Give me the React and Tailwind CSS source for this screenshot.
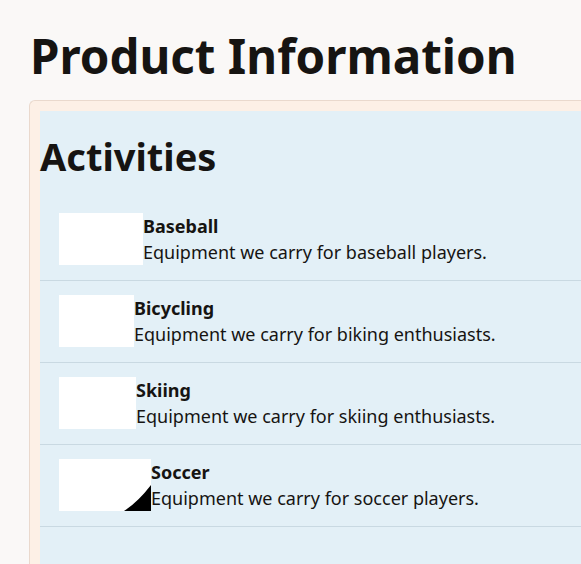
const activities = [
  { name: 'Baseball', text: 'Equipment we carry for baseball players.', w: 'w-[84px]' },
  { name: 'Bicycling', text: 'Equipment we carry for biking enthusiasts.', w: 'w-[75px]' },
  { name: 'Skiing', text: 'Equipment we carry for skiing enthusiasts.', w: 'w-[77px]' },
  { name: 'Soccer', text: 'Equipment we carry for soccer players.', w: 'w-[92px]', corner: true },
]

const Thumb = ({ w, corner }) => (
  <div className={`relative ${w} h-[52px] shrink-0 bg-white`}>
    {corner && (
      <svg className="absolute right-0 bottom-0" width="27" height="27" viewBox="0 0 27 27">
        <path d="M0 27 Q14 18 27 1 L27 27 Z" fill="#000" />
      </svg>
    )}
  </div>
)

export default function App() {
  return (
    <div className="min-h-[564px] bg-[#faf8f7] text-[#161412] font-['Noto_Sans',sans-serif] overflow-hidden">
      <div className="pl-[29px] pt-[26px]">
        <h1 className="text-[47.5px] font-bold leading-[60px] ml-[1px]">Product Information</h1>
        <div className="mt-[14px] w-[600px] rounded-tl-[6px] border-l border-t border-[#ead9cd] bg-[#fdf0e6] pl-[10px] pt-[10px]">
          <div className="bg-[#e3f0f7] pb-[40px]">
            <h2 className="text-[38px] font-bold leading-[50px] pt-[20px] pb-[18px]">Activities</h2>
            <ul>
              {activities.map((a) => (
                <li key={a.name} className="flex pl-[19px] pt-[14px] pb-[15px] border-b border-[#c9d9e2]">
                  <Thumb w={a.w} corner={a.corner} />
                  <div className="flex flex-col">
                    <span className="text-[18px] font-bold leading-[26px]">{a.name}</span>
                    <span className="text-[18px] leading-[26px]">{a.text}</span>
                  </div>
                </li>
              ))}
            </ul>
          </div>
        </div>
      </div>
    </div>
  )
}
